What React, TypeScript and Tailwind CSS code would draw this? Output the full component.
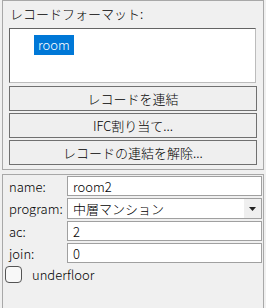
import React from 'react';

const font = { fontFamily: '"Noto Sans CJK JP", "Liberation Sans", sans-serif' };

function Btn({ label }: { label: string }) {
  return (
    <button className="h-[25px] w-full border border-[#707070] bg-[#efefef] text-[13px] leading-none text-black font-light">
      {label}
    </button>
  );
}

function Field({ label, value }: { label: string; value: string }) {
  return (
    <div className="flex items-center h-[20px]">
      <span className="w-[64px] pl-[6px] text-[13px] leading-none">{label}</span>
      <div className="flex-1 h-[20px] border border-[#a0a0a0] bg-white px-[5px] flex items-center text-[13px] leading-none">
        {value}
      </div>
    </div>
  );
}

export default function App() {
  return (
    <div className="w-[266px] h-[308px] bg-[#f0f0f0] overflow-hidden text-black font-light" style={font}>
      <div className="ml-[2px] w-[262px] h-[170px] border border-[#a8a8a8] px-[6px] pt-[6px] flex flex-col">
        <div className="text-[13px] leading-none h-[16px] pl-[1px]">レコードフォーマット:</div>
        <div className="mt-[5px] h-[55px] border border-[#bcbcbc] border-t-[#646464] border-l-[#646464] bg-white pl-[24px] pt-[2px] mr-[1px]">
          <span className="inline-flex items-center h-[20px] px-[4px] bg-[#0078d7] text-white text-[13px] leading-none">
            room
          </span>
        </div>
        <div className="mt-[3px] flex flex-col gap-[2px]">
          <Btn label="レコードを連結" />
          <Btn label="IFC割り当て..." />
          <Btn label="レコードの連結を解除..." />
        </div>
      </div>
      <div className="mt-[4px] ml-[2px] w-[262px] h-[140px] border border-[#a8a8a8] pt-[1px] pr-[1px] flex flex-col gap-[2px]">
        <Field label="name:" value="room2" />
        <div className="flex items-center h-[21px]">
          <span className="w-[64px] pl-[6px] text-[13px] leading-none">program:</span>
          <div className="flex-1 h-[21px] border border-[#a0a0a0] bg-white flex items-center text-[13px] leading-none">
            <span className="flex-1 px-[5px]">中層マンション</span>
            <span className="w-[17px] h-full bg-[#efefef] flex items-center justify-center">
              <svg width="7" height="4" viewBox="0 0 7 4">
                <path d="M0 0H7L3.5 4Z" fill="#222" />
              </svg>
            </span>
          </div>
        </div>
        <Field label="ac:" value="2" />
        <Field label="join:" value="0" />
        <div className="flex items-center mt-[1px] ml-[2px]">
          <span className="w-[17px] h-[17px] rounded-[4px] border border-[#555] bg-[#f8f8f8]" />
          <span className="ml-[10px] text-[13px] leading-none">underfloor</span>
        </div>
      </div>
    </div>
  );
}
